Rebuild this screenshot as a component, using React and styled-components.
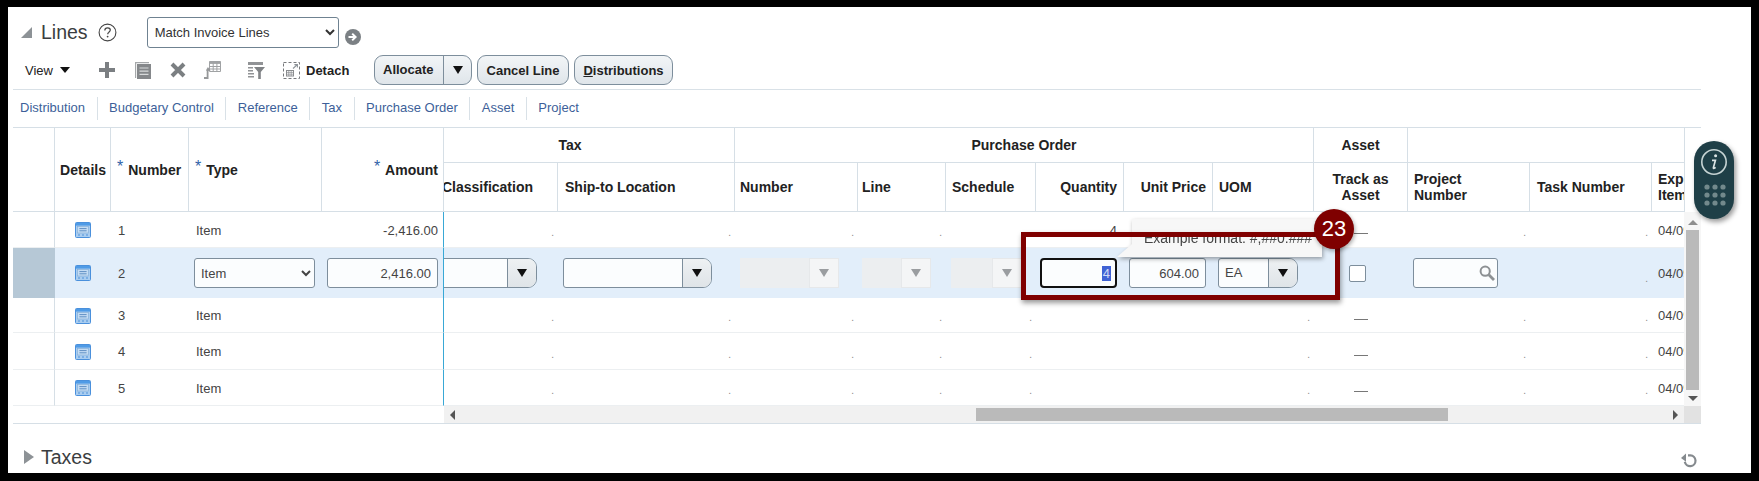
import React from 'react';
import styled, { createGlobalStyle } from 'styled-components';

const GlobalStyle = createGlobalStyle`
  html, body {
    margin: 0;
    padding: 0;
    background: #000;
    font-family: "Liberation Sans", Arial, sans-serif;
  }
`;

const ROW_HEIGHTS = [36, 50, 35, 37, 36];
const BODY_ROWS = ROW_HEIGHTS.map(h => h + 'px').join(' ');
const FROZEN_COLS = '42px 56px 78px 133px 122px';
const SCROLL_COLS = '152px 177px 123px 88px 90px 88px 89px 101px 94px 122px 122px 120px';

function Triangle({ points, color = '#8d9296', width = 12, height = 12 }) {
  return (
    <svg width={width} height={height} viewBox={`0 0 ${width} ${height}`}>
      <polygon points={points} fill={color} />
    </svg>
  );
}

function HelpIcon() {
  return (
    <svg width="19" height="19" viewBox="0 0 19 19">
      <circle cx="9.5" cy="9.5" r="8.4" fill="none" stroke="#444" strokeWidth="1.1" />
      <path d="M6.8 7.4c0-1.6 1.2-2.5 2.8-2.5s2.7.9 2.7 2.2c0 1.2-.8 1.7-1.6 2.3-.7.5-1 .9-1 1.8" fill="none" stroke="#444" strokeWidth="1.2" />
      <circle cx="9.6" cy="13.6" r=".9" fill="#444" />
    </svg>
  );
}

function GoIcon() {
  return (
    <svg width="16" height="16" viewBox="0 0 16 16">
      <circle cx="8" cy="8" r="8" fill="#7b8084" />
      <path d="M3.5 8h6M7.2 4.6 10.6 8l-3.4 3.4" fill="none" stroke="#fff" strokeWidth="2" />
    </svg>
  );
}

function PlusIcon() {
  return (
    <svg width="16" height="16" viewBox="0 0 16 16">
      <path d="M6 0h4v6h6v4h-6v6H6v-6H0V6h6z" fill="#7b7f82" />
    </svg>
  );
}

function DuplicateIcon() {
  return (
    <svg width="16" height="17" viewBox="0 0 16 17">
      <path d="M0 0h14v1.2H1.2V16H0z" fill="#a5a8aa" />
      <rect x="2" y="2" width="14" height="15" fill="#85888b" />
      <path d="M4.5 6h9M4.5 9.2h9M4.5 12.4h9" stroke="#d8dadb" strokeWidth="1.2" />
    </svg>
  );
}

function CloseIcon() {
  return (
    <svg width="16" height="16" viewBox="0 0 16 16">
      <path d="M2 2l12 12M14 2 2 14" stroke="#7b7f82" strokeWidth="4" />
    </svg>
  );
}

function FreezeIcon() {
  return (
    <svg width="17" height="18" viewBox="0 0 17 18">
      <path d="M5.5 .5h11v10h-11z" fill="#fff" stroke="#a0a2a4" />
      <rect x="5.5" y=".5" width="11" height="2.4" fill="#a0a2a4" />
      <path d="M5.5 5.5h11M5.5 8h11M9.2 .5v10M12.9 .5v10" stroke="#a0a2a4" strokeWidth="1" />
      <path d="M0 17h3.6V8.6H6" fill="none" stroke="#96989a" strokeWidth="1.8" />
      <path d="M2 9.8 3.9 6 6.6 9.8z" fill="#96989a" />
    </svg>
  );
}

function FilterIcon() {
  return (
    <svg width="17" height="17" viewBox="0 0 17 17">
      <path d="M0 0h15v3H0zM0 5h5v1.6H0zM0 8h5v1.6H0zM0 11h6v1.6H0zM0 14h6v1.6H0z" fill="#919396" />
      <path d="M6 5h11l-4.2 5V17h-2.6v-7z" fill="#808386" />
    </svg>
  );
}

function DetachIcon() {
  return (
    <svg width="17" height="17" viewBox="0 0 17 17">
      <rect x=".5" y=".5" width="16" height="16" fill="none" stroke="#77797c" strokeDasharray="3 2" />
      <rect x="3.5" y="8.5" width="7" height="5.5" fill="#fff" stroke="#8a8c8f" />
      <path d="M3.5 10.4h7M3.5 12.2h7M5.8 8.5V14M8.2 8.5V14" stroke="#8a8c8f" strokeWidth=".7" />
      <path d="M10 6.5 14 2.8M11.4 2.6H14.4V5.6" fill="none" stroke="#8c9297" strokeWidth="1.1" />
    </svg>
  );
}

function DetailsIcon() {
  return (
    <svg width="16" height="16" viewBox="0 0 16 16">
      <rect x=".5" y=".5" width="15" height="15" rx="1" fill="#a9cdf0" stroke="#4a90dc" />
      <rect x="1" y="1" width="14" height="2.6" fill="#4f9be6" />
      <rect x="2.4" y="4.4" width="11.2" height="6.6" fill="#c4dcf3" stroke="#7fa9d4" strokeWidth=".6" />
      <path d="M4.4 6.6h7.2M4.4 8.8h7.2" stroke="#5f8fc4" strokeWidth="1" />
      <path d="M3 13h2M7 13h2M11 13h2" stroke="#6ea5df" strokeWidth="1.4" />
    </svg>
  );
}

function SearchIcon() {
  return (
    <svg width="16" height="16" viewBox="0 0 16 16">
      <circle cx="6.2" cy="6.2" r="4.6" fill="none" stroke="#8d9194" strokeWidth="2" />
      <path d="M9.8 9.8 15 15" stroke="#8d9194" strokeWidth="2.8" />
    </svg>
  );
}

function RefreshIcon() {
  return (
    <svg width="16" height="16" viewBox="0 0 16 16">
      <path d="M7 3.4h2.4a5.4 5.4 0 1 1-5.6 6.4" fill="none" stroke="#858a8e" strokeWidth="2.2" />
      <path d="M0 6 5 1.6v8.2z" fill="#858a8e" />
    </svg>
  );
}

function InfoPillIcon() {
  return (
    <svg width="40" height="78" viewBox="0 0 40 78">
      <circle cx="20" cy="21" r="12.2" fill="none" stroke="#c6d3d3" strokeWidth="1.6" />
      <circle cx="21.6" cy="14.8" r="1.5" fill="#dbe4e4" />
      <path d="M18 19.4h3.4l-2 7.2c-.2.8.5 1 1.2.5l1-.8" fill="none" stroke="#dbe4e4" strokeWidth="1.7" />
      {[46, 54, 62].map(cy =>
        [13, 21, 29].map(cx => <circle key={`${cx}-${cy}`} cx={cx} cy={cy} r="2.6" fill="#73898c" />)
      )}
    </svg>
  );
}

function ComboBox({ width, value, disabled }) {
  return (
    <Combo $width={width} $disabled={disabled}>
      <ComboValue>{value}</ComboValue>
      <ComboButton $disabled={disabled}><DownArrow $disabled={disabled} /></ComboButton>
    </Combo>
  );
}

const frozenRows = ['1', '2', '3', '4', '5'];

function FrozenPane() {
  return (
    <Frozen>
      <HeadCell />
      <HeadCell $center>Details</HeadCell>
      <HeadCell><Star>*</Star>Number</HeadCell>
      <HeadCell><Star>*</Star>Type</HeadCell>
      <HeadCell $right><Star>*</Star>Amount</HeadCell>
      {frozenRows.map((n, i) => {
        const active = n === '2';
        return (
          <React.Fragment key={n}>
            <Cell $selector $active={active} />
            <Cell $active={active} $justify="center"><DetailsIcon /></Cell>
            <Cell $active={active} $pad="7px">{n}</Cell>
            <Cell $active={active} $pad={active ? '5px' : '7px'}>
              {active ? <TypeSelect defaultValue="Item"><option>Item</option></TypeSelect> : 'Item'}
            </Cell>
            <Cell $active={active} $edge $justify="flex-end" $pad="5px">
              {active ? <TextBox $width="111px" $right defaultValue="2,416.00" readOnly /> : i === 0 ? '-2,416.00' : ''}
            </Cell>
          </React.Fragment>
        );
      })}
    </Frozen>
  );
}

function EmptyCells({ quantity }) {
  return (
    <>
      <Cell $dots>.</Cell>
      <Cell $dots>.</Cell>
      <Cell $dots>.</Cell>
      <Cell $dots>.</Cell>
      <Cell $dots>.</Cell>
      <Cell $justify="flex-end" $pad="7px">{quantity}</Cell>
      <Cell />
      <Cell $dots>.</Cell>
      <Cell $justify="center"><Dash /></Cell>
      <Cell $dots>.</Cell>
      <Cell $dots>.</Cell>
      <Cell $pad="6px">04/09/2021</Cell>
    </>
  );
}

function ActiveCells() {
  return (
    <>
      <Cell $active $justify="flex-end" $pad="21px"><ComboBox width="126px" /></Cell>
      <Cell $active $pad="5px"><ComboBox width="149px" /></Cell>
      <Cell $active $pad="5px"><ComboBox width="99px" disabled /></Cell>
      <Cell $active $pad="4px"><ComboBox width="69px" disabled /></Cell>
      <Cell $active $pad="5px"><ComboBox width="71px" disabled /></Cell>
      <Cell $active $pad="4px"><QuantityBox><Selected>4</Selected></QuantityBox></Cell>
      <Cell $active $pad="5px"><TextBox $width="77px" $right defaultValue="604.00" readOnly /></Cell>
      <Cell $active $pad="5px"><ComboBox width="80px" value="EA" /></Cell>
      <Cell $active $justify="center" $pad="4px"><CheckBox /></Cell>
      <Cell $active $pad="5px"><SearchBox><SearchIcon /></SearchBox></Cell>
      <Cell $active $dots $low>.</Cell>
      <Cell $active $pad="6px">04/09/2021</Cell>
    </>
  );
}

function ScrollPane() {
  return (
    <Scroller>
      <ScrollGrid>
        <GroupCell $span={2}>Tax</GroupCell>
        <GroupCell $span={6}>Purchase Order</GroupCell>
        <GroupCell $span={1}>Asset</GroupCell>
        <GroupCell $span={3} />
        <ColumnCell $pad="9px">Tax Classification</ColumnCell>
        <ColumnCell $pad="7px">Ship-to Location</ColumnCell>
        <ColumnCell $pad="5px">Number</ColumnCell>
        <ColumnCell $pad="4px">Line</ColumnCell>
        <ColumnCell>Schedule</ColumnCell>
        <ColumnCell $right>Quantity</ColumnCell>
        <ColumnCell $right>Unit Price</ColumnCell>
        <ColumnCell>UOM</ColumnCell>
        <ColumnCell $center>Track as<br />Asset</ColumnCell>
        <ColumnCell>Project<br />Number</ColumnCell>
        <ColumnCell $pad="7px">Task Number</ColumnCell>
        <ColumnCell>Expenditure<br />Item Date</ColumnCell>
        <EmptyCells quantity="4" />
        <ActiveCells />
        <EmptyCells />
        <EmptyCells />
        <EmptyCells />
      </ScrollGrid>
    </Scroller>
  );
}

export default function App() {
  return (
    <>
      <GlobalStyle />
      <Frame>
        <Sheet>
          <TitleRow>
            <Triangle points="0,11 11,0 11,11" />
            <Title>Lines</Title>
            <HelpSlot><HelpIcon /></HelpSlot>
            <ActionSelect defaultValue="Match Invoice Lines"><option>Match Invoice Lines</option></ActionSelect>
            <GoSlot><GoIcon /></GoSlot>
          </TitleRow>

          <Toolbar>
            <ViewMenu>View<DownArrow $small /></ViewMenu>
            <IconSlot $left="29px"><PlusIcon /></IconSlot>
            <IconSlot $left="20px"><DuplicateIcon /></IconSlot>
            <IconSlot $left="19px"><CloseIcon /></IconSlot>
            <IconSlot $left="18px"><FreezeIcon /></IconSlot>
            <IconSlot $left="27px"><FilterIcon /></IconSlot>
            <IconSlot $left="18px"><DetachIcon /></IconSlot>
            <DetachLabel>Detach</DetachLabel>
            <SplitButton>
              <SplitLabel>Allocate</SplitLabel>
              <SplitArrow><DownArrow /></SplitArrow>
            </SplitButton>
            <PlainButton $width="92px">Cancel Line</PlainButton>
            <PlainButton $width="99px"><u>D</u>istributions</PlainButton>
          </Toolbar>

          <Tabs>
            {['Distribution', 'Budgetary Control', 'Reference', 'Tax', 'Purchase Order', 'Asset', 'Project'].map(label => (
              <Tab key={label}>{label}</Tab>
            ))}
          </Tabs>

          <Table>
            <TableTop>
              <FrozenPane />
              <ScrollPane />
              <VerticalBar>
                <VerticalHead />
                <VerticalTrack>
                  <Triangle points="1,8 6,3 11,8" color="#8e8e8e" />
                  <VerticalThumb />
                  <Triangle points="1,4 11,4 6,9" color="#555" />
                </VerticalTrack>
              </VerticalBar>
            </TableTop>
            <ScrollRow>
              <ScrollSpacer />
              <HorizontalTrack>
                <Triangle points="8,1 8,11 3,6" color="#555" />
                <HorizontalThumb />
                <Triangle points="4,1 4,11 9,6" color="#555" />
              </HorizontalTrack>
              <ScrollCorner />
            </ScrollRow>
          </Table>

          <TaxesRow>
            <Triangle points="1,0 11,7 1,14" width={12} height={14} />
            <Title>Taxes</Title>
            <RefreshSlot><RefreshIcon /></RefreshSlot>
          </TaxesRow>

          <FormatTip>
            <TipTail />
            Example format: #,##0.###
          </FormatTip>
          <Callout />
          <CalloutBadge>23</CalloutBadge>
          <InfoPill><InfoPillIcon /></InfoPill>
        </Sheet>
      </Frame>
    </>
  );
}

const Frame = styled.div`
  width: 1759px;
  height: 481px;
  padding: 7px 8px 8px;
  box-sizing: border-box;
  overflow: hidden;
`;

const Sheet = styled.div`
  position: relative;
  height: 466px;
  background: #fff;
  color: #444;
  font-size: 13px;
  overflow: hidden;
`;

const TitleRow = styled.div`
  display: flex;
  align-items: center;
  height: 31px;
  padding: 10px 0 0 13px;
  svg { flex: none; }
`;

const Title = styled.div`
  font-size: 19.5px;
  color: #3a3d40;
  margin-left: 8px;
`;

const HelpSlot = styled.div`
  display: flex;
  margin-left: 10px;
`;

const ActionSelect = styled.select`
  width: 192px;
  height: 31px;
  margin-left: 30px;
  padding: 0 3px;
  font: 13px "Liberation Sans", Arial, sans-serif;
  color: #333;
  background: #fff;
  border: 1px solid #6f8291;
  border-radius: 3px;
`;

const GoSlot = styled.div`
  display: flex;
  margin: 8px 0 0 6px;
`;

const Toolbar = styled.div`
  display: flex;
  align-items: center;
  box-sizing: border-box;
  height: 35px;
  margin: 7px 0 0 5px;
  width: 1688px;
  padding: 0 0 4px 12px;
  border-bottom: 1px solid #d9e1e7;
`;

const ViewMenu = styled.div`
  display: flex;
  align-items: center;
  gap: 7px;
  width: 45px;
  color: #222;
`;

const IconSlot = styled.div`
  display: flex;
  margin-left: ${p => p.$left};
`;

const DetachLabel = styled.div`
  margin-left: 6px;
  width: 43px;
  font-weight: bold;
  color: #222;
`;

const buttonSkin = `
  height: 30px;
  box-sizing: border-box;
  border: 1px solid #7d8e9c;
  border-radius: 9px;
  background: linear-gradient(#f2f5f7, #dfe5ea);
  color: #222;
  font-weight: bold;
  display: flex;
  align-items: center;
`;

const SplitButton = styled.div`
  ${buttonSkin}
  width: 98px;
  margin-left: 25px;
`;

const SplitLabel = styled.div`
  width: 69px;
  height: 100%;
  box-sizing: border-box;
  padding-left: 8px;
  line-height: 28px;
  border-right: 1px solid #7d8e9c;
`;

const SplitArrow = styled.div`
  flex: 1;
  display: flex;
  justify-content: center;
`;

const PlainButton = styled.div`
  ${buttonSkin}
  justify-content: center;
  width: ${p => p.$width};
  margin-left: 5px;
`;

const DownArrow = styled.span`
  display: block;
  width: 0;
  height: 0;
  border-style: solid;
  border-width: ${p => (p.$small ? '6px 5px 0' : '8px 5.5px 0')};
  border-color: ${p => (p.$disabled ? '#9a9da0' : '#111')} transparent transparent;
`;

const Tabs = styled.div`
  display: flex;
  align-items: center;
  height: 37px;
  margin-left: 5px;
  width: 1688px;
`;

const Tab = styled.div`
  height: 23px;
  line-height: 22px;
  padding: 0 11.5px;
  color: #3d5f99;
  border-left: 1px solid #d9e1e7;
  &:first-child {
    padding-left: 7px;
    border-left: 0;
  }
`;

const Table = styled.div`
  margin-left: 5px;
  width: 1688px;
  border-top: 1px solid #d6dfe6;
  border-bottom: 1px solid #d6dfe6;
`;

const TableTop = styled.div`
  display: flex;
`;

const Frozen = styled.div`
  flex: none;
  display: grid;
  grid-template-columns: ${FROZEN_COLS};
  grid-template-rows: 84px ${BODY_ROWS};
  width: 431px;
`;

const Scroller = styled.div`
  width: 1240px;
  overflow: hidden;
`;

const ScrollGrid = styled.div`
  display: grid;
  grid-template-columns: ${SCROLL_COLS};
  grid-template-rows: 35px 49px ${BODY_ROWS};
  width: max-content;
  margin-left: -38px;
`;

const HeadCell = styled.div`
  display: flex;
  align-items: center;
  justify-content: ${p => (p.$right ? 'flex-end' : p.$center ? 'center' : 'flex-start')};
  padding: 0 5px 0 6px;
  box-sizing: border-box;
  font-size: 14px;
  font-weight: bold;
  color: #222;
  border-right: 1px solid #d6dfe6;
  border-bottom: 1px solid #d6dfe6;
`;

const Star = styled.span`
  color: #2f62a8;
  font-weight: normal;
  font-size: 16px;
  margin: -5px 5px 0 0;
`;

const GroupCell = styled.div`
  grid-column: span ${p => p.$span};
  display: flex;
  align-items: center;
  justify-content: center;
  font-size: 14px;
  font-weight: bold;
  color: #222;
  padding-bottom: 1px;
  box-sizing: border-box;
  border-right: 1px solid #d6dfe6;
  border-bottom: 1px solid #d6dfe6;
`;

const ColumnCell = styled.div`
  display: flex;
  align-items: center;
  justify-content: ${p => (p.$right ? 'flex-end' : p.$center ? 'center' : 'flex-start')};
  text-align: ${p => (p.$center ? 'center' : 'left')};
  font-size: 14px;
  line-height: 16px;
  white-space: nowrap;
  padding: 0 6px 0 ${p => p.$pad || '6px'};
  box-sizing: border-box;
  font-weight: bold;
  color: #222;
  border-right: 1px solid #d6dfe6;
  border-bottom: 1px solid #d6dfe6;
`;

const Cell = styled.div`
  display: flex;
  min-width: 0;
  box-sizing: border-box;
  white-space: nowrap;
  align-items: ${p => (p.$dots ? 'flex-end' : 'center')};
  justify-content: ${p => (p.$dots ? 'flex-end' : p.$justify || 'flex-start')};
  padding: ${p => (p.$dots
    ? `0 4px ${p.$low ? '14px' : '9px'} 0`
    : `${p.$active ? '0' : '1px'} ${p.$pad || '0'} 0`)};
  font-size: ${p => (p.$dots ? '10px' : '13px')};
  line-height: ${p => (p.$dots ? '10px' : 'normal')};
  color: ${p => (p.$dots ? '#888' : '#444')};
  background: ${p => (p.$selector && p.$active ? '#b6c8d6' : p.$active ? '#e2eefa' : '#fff')};
  border-bottom: ${p => (p.$active ? '0' : '1px solid #eceff1')};
  border-right: ${p => (p.$edge ? '1px solid #39a8d6' : p.$selector && !p.$active ? '1px solid #d6dfe6' : '0')};
`;

const fieldSkin = `
  height: 30px;
  box-sizing: border-box;
  background: #fbfdfe;
  border: 1px solid #7d8e9c;
  border-radius: 3px;
  color: #444;
  font: 13px "Liberation Sans", Arial, sans-serif;
`;

const TypeSelect = styled.select`
  ${fieldSkin}
  width: 121px;
  padding: 0 2px;
`;

const TextBox = styled.input`
  ${fieldSkin}
  width: ${p => p.$width};
  padding: 0 6px;
  outline: none;
  text-align: ${p => (p.$right ? 'right' : 'left')};
`;

const QuantityBox = styled.div`
  ${fieldSkin}
  width: 77px;
  border: 2px solid #111;
  border-radius: 4px;
  display: flex;
  align-items: center;
  justify-content: flex-end;
  padding-right: 4px;
`;

const Selected = styled.span`
  background: #3f62d4;
  color: #cfd9f5;
  line-height: 15px;
  padding: 0 1px;
`;

const SearchBox = styled.div`
  ${fieldSkin}
  width: 85px;
  display: flex;
  align-items: center;
  justify-content: flex-end;
  padding-right: 2px;
`;

const CheckBox = styled.div`
  width: 17px;
  height: 17px;
  box-sizing: border-box;
  background: #fff;
  border: 1px solid #7d8e9c;
  border-radius: 2px;
  margin-right: 8px;
`;

const Combo = styled.div`
  display: flex;
  flex: none;
  width: ${p => p.$width};
  height: 30px;
  box-sizing: border-box;
  overflow: hidden;
  background: ${p => (p.$disabled ? '#eceef0' : '#fbfdfe')};
  border: ${p => (p.$disabled ? '0' : '1px solid #7d8e9c')};
  border-radius: ${p => (p.$disabled ? '0' : '3px 9px 9px 3px')};
`;

const ComboValue = styled.div`
  flex: 1;
  min-width: 0;
  line-height: 28px;
  padding-left: 6px;
`;

const ComboButton = styled.div`
  flex: none;
  width: ${p => (p.$disabled ? '30px' : '29px')};
  display: flex;
  align-items: center;
  justify-content: center;
  box-sizing: border-box;
  background: ${p => (p.$disabled ? '#f4f5f6' : 'linear-gradient(#eef1f3, #dfe4e8)')};
  border: ${p => (p.$disabled ? '1px solid #e6e8ea' : '0')};
  border-left: 1px solid ${p => (p.$disabled ? '#e6e8ea' : '#7d8e9c')};
`;

const Dash = styled.span`
  display: block;
  width: 14px;
  height: 1px;
  margin-top: 7px;
  background: #777;
`;

const VerticalBar = styled.div`
  flex: none;
  width: 17px;
  display: flex;
  flex-direction: column;
`;

const VerticalHead = styled.div`
  height: 84px;
  flex: none;
  border-left: 1px solid #d6dfe6;
  box-sizing: border-box;
`;

const VerticalTrack = styled.div`
  flex: 1;
  display: flex;
  flex-direction: column;
  align-items: center;
  background: #f6f6f6;
  padding-top: 5px;
  box-sizing: border-box;
`;

const VerticalThumb = styled.div`
  width: 13px;
  height: 160px;
  margin: 1px 0 2px;
  background: #bababa;
`;

const ScrollRow = styled.div`
  display: flex;
  height: 17px;
`;

const ScrollSpacer = styled.div`
  width: 431px;
  flex: none;
`;

const HorizontalTrack = styled.div`
  flex: 1;
  display: flex;
  align-items: center;
  background: #f1f1f1;
  padding: 0 3px;
  svg { flex: none; }
`;

const HorizontalThumb = styled.div`
  width: 472px;
  height: 13px;
  margin: 0 221px 0 517px;
  background: #bababa;
`;

const ScrollCorner = styled.div`
  width: 17px;
  flex: none;
  background: #e2e2e2;
`;

const TaxesRow = styled.div`
  display: flex;
  align-items: center;
  height: 24px;
  margin-top: 21px;
  padding-left: 15px;
  svg { flex: none; }
  ${Title} { margin-left: 6px; }
`;

const RefreshSlot = styled.div`
  display: flex;
  margin: 0 0 -6px auto;
  padding-right: 54px;
`;

const FormatTip = styled.div`
  position: absolute;
  left: 1124px;
  top: 212px;
  width: 190px;
  height: 38px;
  box-sizing: border-box;
  padding: 11px 0 0 12px;
  background: #f7f7f7;
  filter: drop-shadow(1px 2px 2px rgba(0, 0, 0, 0.35));
  color: #444;
  font-size: 14px;
`;

const TipTail = styled.span`
  position: absolute;
  left: -15px;
  bottom: 0;
  width: 15px;
  height: 13px;
  background: #f7f7f7;
  clip-path: polygon(100% 0, 0 100%, 100% 100%);
`;

const Callout = styled.div`
  position: absolute;
  left: 1013px;
  top: 225px;
  width: 319px;
  height: 68px;
  box-sizing: border-box;
  border: 5px solid #7f0000;
  box-shadow: 1px 3px 5px rgba(0, 0, 0, 0.4);
`;

const CalloutBadge = styled.div`
  position: absolute;
  left: 1306px;
  top: 202px;
  width: 40px;
  height: 40px;
  border-radius: 50%;
  display: flex;
  align-items: center;
  justify-content: center;
  background: #7f0000;
  color: #fff;
  font-size: 22px;
  box-shadow: 1px 2px 4px rgba(0, 0, 0, 0.35);
`;

const InfoPill = styled.div`
  position: absolute;
  left: 1686px;
  top: 134px;
  width: 40px;
  height: 78px;
  border-radius: 20px;
  background: #1f3f47;
  box-shadow: 2px 3px 5px rgba(0, 0, 0, 0.4);
`;
